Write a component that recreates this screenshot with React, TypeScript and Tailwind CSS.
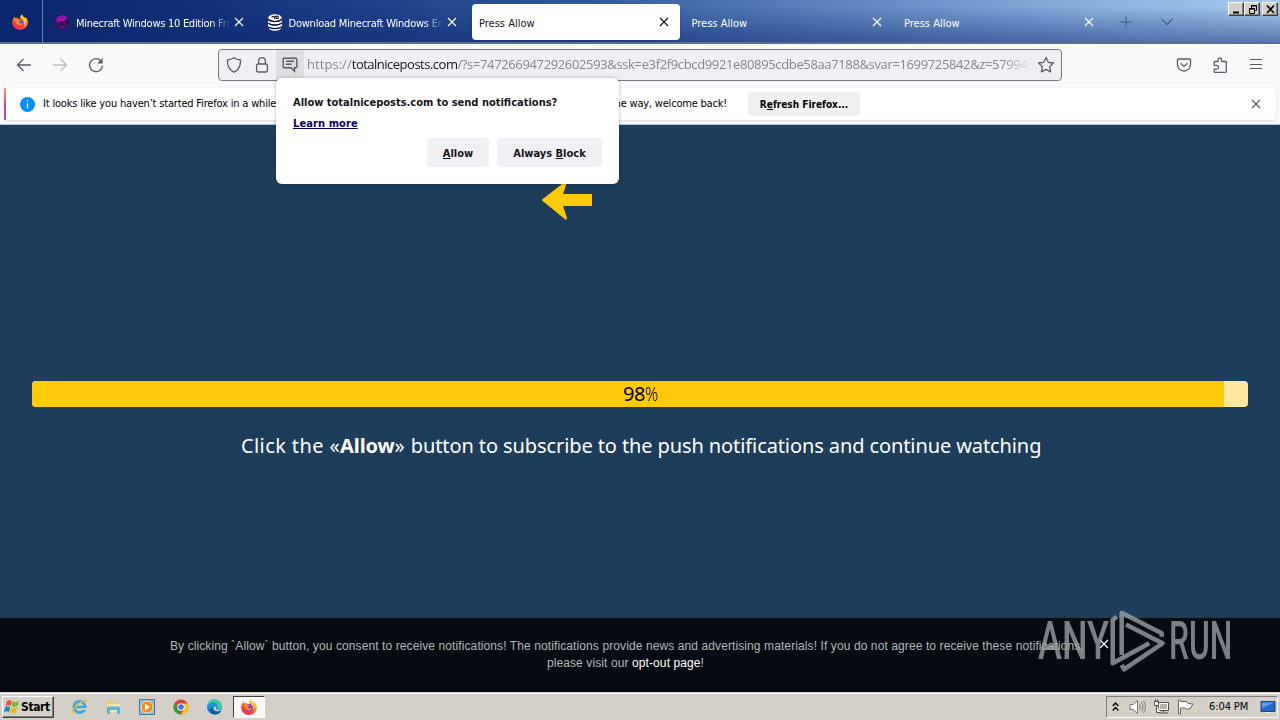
import React from "react";

type IconProps = { className?: string };

function Cross({ className = "" }: IconProps) {
  return (
    <svg className={`shrink-0 ${className}`} width="10" height="10" viewBox="0 0 10 10" fill="none" stroke="currentColor" strokeWidth="1.15">
      <path d="M1 1l8 8M9 1L1 9" />
    </svg>
  );
}

function FirefoxLogo({ className = "" }: IconProps) {
  return (
    <svg className={`shrink-0 ${className}`} width="16" height="16" viewBox="0 0 16 16">
      <defs>
        <linearGradient id="fxFlame" x1="0.85" y1="0.05" x2="0.25" y2="1">
          <stop offset="0" stopColor="#fff44f" />
          <stop offset="0.35" stopColor="#ff9a1f" />
          <stop offset="0.7" stopColor="#ff4433" />
          <stop offset="1" stopColor="#e6236d" />
        </linearGradient>
      </defs>
      <path d="M10 0.2c.5 1.9 2 2.7 3.1 3.9.3-.1.4-.6.3-1.1 1.6 1.5 2.5 3.6 2.4 5.7-.2 4-3.500 7.200-7.800 7.200C3.700 15.900.2 12.700.2 8.400c0-2 .7-3.600 1.700-4.800l.5-1.100 1.100 1.800c.8-.3 1.700-.2 2.400.1L8.500 5C7.800 3.200 8.500 1.100 10 .2z" fill="url(#fxFlame)" />
      <circle cx="8.200" cy="8.700" r="3.700" fill="#7a42d6" />
      <path d="M3.300 5.300c1.500-.7 2.900-.3 3.900.6l1.800.1c-.3 1-1.700 1.100-2.200 1.700-.2 1.100 1 1.900 2.200 1.700 1-.2 1.700-.1 1.700.3-.7 1.800-2.900 2.300-4.500 1.500C3.500 10 3 7.200 3.300 5.300z" fill="#ff8a20" />
      <path d="M10.200 2c.2 2 2.500 3 2.800 5.700.1 1.300-.3 2.500-.9 3.300.1-2.700-.4-4.500-2-5.900C9.100 4.100 9.500 2.800 10.200 2z" fill="#ffd23d" />
    </svg>
  );
}

function PurpleOrb() {
  return (
    <svg className="shrink-0" width="16" height="16" viewBox="0 0 16 16">
      <circle cx="8" cy="8" r="7.600" fill="#3b1157" />
      <path d="M1.500 7C2 3.500 5 1 8.500 1.200c2.300.2 4 1.300 5 2.800L9.500 8 6 6.500z" fill="#8f12a6" />
      <path d="M2.500 11.500l4-2.500 3 1 4-4c.5 4-2 7.800-6 7.800-2 0-4-.8-5-2.300z" fill="#681480" />
      <path d="M3 8.500l5-3.500 2 1" stroke="#b52bbd" strokeWidth="1" fill="none" />
      <path d="M4 13l4-3 3 1 3.500-4" stroke="#270c43" strokeWidth="1.400" fill="none" />
    </svg>
  );
}

function StackedDiscs() {
  return (
    <svg className="shrink-0" width="16" height="17" viewBox="0 0 16 17">
      <ellipse cx="8" cy="3.700" rx="6.700" ry="3.500" fill="#fff" />
      <path d="M4.500 3.200L7 2.200l1 2.600M8.500 2l1 2.800M9 2l2 .2.300 2-2 .600" stroke="#111" strokeWidth="1.100" fill="none" />
      <path d="M1 6c2 3 11 3 14 0v2.200c-3 3-11 3-14 .3zM1 9.600c2 2.900 11 2.900 14 0V12c-3 2.600-11 2.600-14 .3zM1.500 13.500c3 2.200 10 2.200 13 0-.5 2-3 3.300-6.500 3.300s-6-1.300-6.500-3.300z" fill="#fff" />
      <path d="M1.500 5.500c3 2.600 10 2.600 13 0M1.500 9.200c3 2.500 10 2.500 13 0M1.500 12.900c3 2.200 10 2.200 13 0" stroke="#10131f" strokeWidth="1.100" fill="none" />
    </svg>
  );
}

function Tab({ icon, title, active = false, fade = false, textClass = "" }: { icon?: React.ReactNode; title: string; active?: boolean; fade?: boolean; textClass?: string }) {
  return (
    <div className={`mr-[4.500px] flex h-9 w-52 shrink-0 items-center rounded pl-[7px] pr-[11px] ${active ? "bg-white text-[#15141a] shadow-sm" : "text-white"}`}>
      {icon && <span className="mr-[5px] shrink-0">{icon}</span>}
      <span className={`mt-[3px] min-w-0 flex-1 overflow-hidden whitespace-nowrap ${textClass} ${fade ? "[mask-image:linear-gradient(to_right,#000_88%,transparent)]" : ""}`}>{title}</span>
      <Cross className="ml-1" />
    </div>
  );
}

function TabStrip() {
  return (
    <div className="flex h-11 w-full items-start border-b-2 border-[#55709d] bg-[linear-gradient(to_bottom,transparent_15%,#0c287080),linear-gradient(to_right,#0a246a_0%,#123078_15%,#1f4189_30%,#345a9e_46%,#6388c1_67%,#8bb1df_86%,#a6caf0_100%)]">
      <div className="mr-[4px] flex h-[42px] w-[43px] items-center justify-center border-r border-[#6279aa] pr-0.5 pt-0.5">
        <FirefoxLogo />
      </div>
      <div className="flex pt-1">
        <Tab icon={<PurpleOrb />} title="Minecraft Windows 10 Edition Free" fade textClass="ml-px tracking-[-0.270px]" />
        <Tab icon={<StackedDiscs />} title="Download Minecraft Windows Edition" fade textClass="ml-px tracking-[-0.220px]" />
        <div className="flex">
          <Tab title="Press Allow" active />
          <Tab title="Press Allow" />
          <Tab title="Press Allow" />
        </div>
      </div>
      <div className="flex h-11 items-center gap-[29px] pl-[10px] text-[#4b6791]">
        <svg width="12" height="12" viewBox="0 0 12 12" stroke="currentColor" strokeWidth="1.300"><path d="M6 .5v11M.5 6h11" /></svg>
        <svg width="12" height="8" viewBox="0 0 12 8" fill="none" stroke="currentColor" strokeWidth="1.500"><path d="M.5 1L6 6.500 11.500 1" /></svg>
      </div>
      <div className="ml-auto flex pr-0.5 pt-0.5">
        <WindowButton><path d="M3 9.500h6" strokeWidth="2" /></WindowButton>
        <WindowButton><path d="M5.500 5V2.500h5v5H8M5 3h6M3.500 5.500h5v5h-5zM3 6h6" /></WindowButton>
        <div className="w-0.5" />
        <WindowButton><path d="M3 2.500l7 7.500M10 2.500L3 10" strokeWidth="1.700" /></WindowButton>
      </div>
    </div>
  );
}

function WindowButton({ children }: { children: React.ReactNode }) {
  return (
    <div className="flex h-3.5 w-4 items-center justify-center border border-b-[#404040] border-l-white border-r-[#404040] border-t-white bg-[#d4d0c8] shadow-[inset_-1px_-1px_#808080]">
      <svg width="13" height="12" viewBox="0 0 13 12" fill="none" stroke="#000">{children}</svg>
    </div>
  );
}

function NavBar() {
  return (
    <div className="flex h-[41px] w-full items-center bg-[#f9f9fb] text-[#5b5b66]">
      <div className="flex w-[218px] items-center gap-[20px] pl-4">
        <svg width="16" height="16" viewBox="0 0 16 16" fill="none" stroke="currentColor" strokeWidth="1.300"><path d="M15 8H1.500M7.500 2l-6 6 6 6" /></svg>
        <svg width="16" height="16" viewBox="0 0 16 16" fill="none" stroke="#bebec4" strokeWidth="1.300"><path d="M1 8h13.500M8.500 2l6 6-6 6" /></svg>
        <svg width="16" height="16" viewBox="0 0 16 16" fill="none" stroke="currentColor" strokeWidth="1.400"><path d="M13.400 4.500A6.500 6.500 0 1 0 14.500 8.800" /><path d="M14.700 1v5.500H9.200z" fill="currentColor" stroke="none" /></svg>
      </div>
      <div className="flex h-8 w-[844px] items-center rounded border border-[#77777f] bg-[#f0f0f4]">
        <div className="flex w-[57px] items-center gap-3 pl-[7px]">
          <svg width="16" height="16" viewBox="0 0 16 16" fill="none" stroke="currentColor" strokeWidth="1.300"><path d="M8 .8c2.200 1.500 4.500 2 6.500 2.200.3 5.200-1.500 9.700-6.500 12.200C3 12.700 1.200 8.200 1.500 3 3.500 2.800 5.800 2.300 8 .8z" /></svg>
          <svg width="16" height="16" viewBox="0 0 16 16" fill="none" stroke="currentColor" strokeWidth="1.300"><rect x="2.600" y="7" width="10.800" height="8" rx="1.500" /><path d="M4.700 7V4a3.300 3.300 0 0 1 6.600 0v3" /></svg>
        </div>
        <div className="flex h-[30px] w-7 items-center justify-center bg-[#dfdfe3]">
          <svg width="16" height="16" viewBox="0 0 16 16" fill="none" stroke="currentColor" strokeWidth="1.400"><path d="M2.200 1.200h11.600c.6 0 1 .4 1 1v7.600c0 .6-.4 1-1 1h-1.300v3.500L9 10.800H2.200c-.6 0-1-.4-1-1V2.200c0-.6.4-1 1-1zM4 4.300h8M4 7.300h5.500" /></svg>
        </div>
        <div className="ml-[3px] w-[724px] overflow-hidden whitespace-nowrap pb-px font-['Open_Sans',sans-serif] text-[13px] leading-5 tracking-[-0.360px] text-[#85858c] [font-stretch:normal] [mask-image:linear-gradient(to_right,#000_96%,transparent)]">
          <span className="tracking-[0.050px]">https://</span><span className="tracking-[-0.500px] text-[#15141a]">totalniceposts.com</span>/?s=747266947292602593&amp;ssk=e3f2f9cbcd9921e80895cdbe58aa7188&amp;svar=1699725842&amp;z=5799412
        </div>
        <svg className="ml-[6px]" width="18" height="18" viewBox="0 0 18 18" fill="none" stroke="currentColor" strokeWidth="1.300" strokeLinejoin="round"><path d="M9 1.500l2.300 4.800 5.200.7-3.800 3.600.9 5.300L9 13.400l-4.600 2.500.9-5.300L1.500 7l5.200-.7z" /></svg>
      </div>
      <div className="ml-auto flex items-center gap-5 pr-4">
        <svg width="16" height="16" viewBox="0 0 16 16" fill="none" stroke="currentColor" strokeWidth="1.300"><path d="M2.500 2h11c.6 0 1 .4 1 1v4.500a6.500 6.500 0 0 1-13 0V3c0-.6.4-1 1-1z" /><path d="M4.600 6.200L8 9.400l3.400-3.200" /></svg>
        <svg width="16" height="16" viewBox="0 0 16 16" fill="none" stroke="currentColor" strokeWidth="1.300"><path d="M6 4.500V2.700a1.800 1.800 0 0 1 3.600 0v1.800h3.900c.5 0 .8.300.8.800v9.200c0 .5-.3.800-.8.800H3c-.5 0-.8-.3-.8-.8v-2.300h2.500a1.900 1.900 0 0 0 0-3.800H2.200V5.300c0-.5.300-.8.800-.8z" /></svg>
        <svg width="16" height="16" viewBox="0 0 16 16" stroke="currentColor" strokeWidth="1.200"><path d="M2 2.500h12M2 7.500h12M2 11.500h12" /></svg>
      </div>
    </div>
  );
}

function InfoBar() {
  return (
    <div className="flex h-10 w-full items-start border-b border-[#a9c8e0] bg-[#f9f9fb] px-1 pt-[3px]">
      <div className="flex h-8 flex-1 items-center rounded bg-white shadow-sm">
        <div className="h-8 w-0.5 bg-gradient-to-b from-[#ff9a6c] via-[#e13d80] to-[#9b52d8]" />
        <svg className="ml-3.5" width="15" height="15" viewBox="0 0 15 15"><circle cx="7.500" cy="7.500" r="7.500" fill="#0090ed" /><path d="M7.500 6.200V11.500M7.500 3.200v1.500" stroke="#fff" strokeWidth="1.300" /></svg>
        <div className="ml-2 flex w-[705px] whitespace-nowrap tracking-[-0.180px] text-black">
          <span>It looks like you haven’t started Firefox in a while.</span>
          <span className="ml-auto pr-[21px] tracking-[-0.200px]">By the way, welcome back!</span>
        </div>
        <button className="flex h-6 w-28 items-center justify-center rounded bg-[#f0f0f0] pt-px text-[10px] font-bold text-black"><span>R<u>e</u>fresh Firefox...</span></button>
        <Cross className="ml-auto mr-[15px] text-[#5b5b66]" />
      </div>
    </div>
  );
}

function PermissionPopup() {
  return (
    <div className="absolute left-[276px] top-[78px] z-10 flex h-[106px] w-[343px] flex-col rounded-md bg-white px-4 pt-[18px] font-bold text-[#15141a] shadow-[0_0_4px_rgba(0,0,0,0.25)]">
      <p className="h-[21px] whitespace-nowrap pl-px leading-[14px]">Allow totalniceposts.com to send notifications?</p>
      <p className="pl-px leading-[14px] tracking-[0.100px] text-[#0b0060] underline">Learn more</p>
      <div className="mt-[7px] flex justify-end gap-2 pr-px">
        <button className="h-[29px] w-[62px] rounded bg-[#f0f0f4] pt-0.5"><u>A</u>llow</button>
        <button className="h-[29px] w-[105px] rounded bg-[#f0f0f4] pt-0.5">Always <u>B</u>lock</button>
      </div>
    </div>
  );
}

function AnyRunMark() {
  return (
    <div className="absolute left-[1038px] top-[608px] flex h-[66px] w-[196px] items-center text-[#a4a7aa] opacity-75 [font-stretch:normal]">
      <span className="w-[70px] origin-left scale-x-[0.680] whitespace-nowrap font-['Roboto',sans-serif] text-[53px] font-medium leading-none">ANY</span>
      <svg className="shrink-0" width="58" height="66" viewBox="0 0 58 66" fill="none" stroke="currentColor" strokeWidth="4.500" strokeLinejoin="round">
        <path d="M8.700 8.700L4.700 12v43.300l36.600-20" />
        <path d="M13.700 47V4.700l40 20.500v3.500" />
        <path d="M18 16.500l36.500 18.800L16 61.300 13.700 57" />
      </svg>
      <span className="ml-[3px] origin-left scale-x-[0.600] whitespace-nowrap font-['Roboto',sans-serif] text-[53px] font-medium leading-none">RUN</span>
    </div>
  );
}

function PageContent() {
  return (
    <main className="flex h-[567px] w-full flex-col bg-[#1d3d5b] text-white">
      <div className="flex h-64 items-start pl-[541px] pt-[56px]">
        <svg width="52" height="40" viewBox="0 0 52 40"><path d="M.500 19L25 0l1 1-4 12h29v12H22l4 12-1 2z" fill="#ffcb08" /></svg>
      </div>
      <div className="mx-8 flex h-[26px] items-center overflow-hidden rounded bg-[#ffe9a0] shadow-[0_0_1px_#3c3c30]">
        <div className="flex h-full w-[1192px] items-center bg-[#ffcb08] pl-[591px]">
          <span className="whitespace-nowrap font-['Noto_Sans',sans-serif] text-[20px] tracking-[-0.500px] text-black">98<span className="inline-block origin-left scale-x-[0.820] font-light">%</span></span>
        </div>
      </div>
      <p className="mt-[25px] whitespace-nowrap pl-[241px] font-['Noto_Sans',sans-serif] text-[20px] leading-7 tracking-[-0.100px] [font-stretch:normal]"><span className="tracking-[0.400px]">Click the «</span><b className="tracking-[-0.100px]">Allow</b><span className="tracking-[0.400px]">» </span>button to subscribe to the push notifications and continue watching</p>
      <div className="mt-auto flex h-[74px] bg-[#060b12] pl-[170px] pt-[20px] text-center font-['Liberation_Sans',sans-serif] text-[12px] leading-[17px] tracking-[0.100px] text-[#b4b6b8]">
        <p className="w-[911px] whitespace-nowrap">By clicking `Allow` button, you consent to receive notifications! The notifications provide news and advertising materials! If you do not agree to receive these notifications,<br />please visit our <span className="text-white">opt-out page</span>!</p>
        <Cross className="ml-[18px] mt-px text-white" />
      </div>
    </main>
  );
}

function Taskbar() {
  return (
    <footer className="flex h-7 w-full items-center border-t border-[#d4d0c8] bg-[#d4d0c8] text-black shadow-[inset_0_1px_white]">
      <button className="ml-0.5 flex h-[22px] w-[52px] items-center gap-px border border-b-[#404040] border-l-white border-r-[#404040] border-t-white pl-px text-[12px] font-bold tracking-[-0.400px] shadow-[inset_-1px_-1px_#808080]">
        <svg className="shrink-0" width="16" height="16" viewBox="0 0 16 16"><path d="M3 2c2-1 3-.8 5 .2L6.500 7C5 6 3.500 6 1.700 6.700z" fill="#ee5524" /><path d="M8.800 2.600c2 .8 3.700.8 6.200-.6l-1.500 5c-2 1.200-4 1-6-.1z" fill="#79b82e" /><path d="M1.400 8c2-.8 3.200-.6 4.800.3L5 13c-2-1-3.400-.8-5 0z" fill="#1687c9" /><path d="M7 8.700c2 .9 4 .9 6.200-.3l-1.400 5c-2 1-4 .9-6-.1z" fill="#f4b913" /></svg>
        <span>Start</span>
      </button>
      <div className="ml-[17px] flex items-center gap-[17.200px]">
        <svg width="17" height="17" viewBox="0 0 17 17" fill="none"><circle cx="8.500" cy="9" r="5.500" stroke="#3ba7df" strokeWidth="3" /><path d="M4 9h10" stroke="#3ba7df" strokeWidth="2.500" /><path d="M11.500 11h5" stroke="#d4d0c8" strokeWidth="2" /><path d="M3 15C-.5 17 1 12 5 8S17-.5 15.500 4" stroke="#e6bd36" strokeWidth="1.300" /></svg>
        <svg width="17" height="16" viewBox="0 0 17 16"><path d="M1 2h6l1 1.500h7V13H1z" fill="#e7c973" /><path d="M2 5h13v8H2z" fill="#f5e8a8" /><path d="M2 15V9c0-1 .5-1.500 1.500-1.500h10c1 0 1.500.5 1.500 1.500v6h-3v-4H5v4z" fill="#63b5d8" /></svg>
        <svg width="16" height="16" viewBox="0 0 16 16"><path d="M.5.5h15v15H.5z" fill="#8bbddd" stroke="#397ca9" /><circle cx="8" cy="8" r="6" fill="#f58b17" stroke="#fff" strokeWidth=".6" /><path d="M6 4.500l5 3.500-5 3.500z" fill="#fff" /></svg>
        <svg width="16" height="16" viewBox="0 0 16 16"><circle cx="8" cy="8" r="7.500" fill="#e73c30" /><path d="M1.500 4.200L6 12l2 3.500A7.500 7.500 0 0 1 1.500 4.200z" fill="#27a34c" /><path d="M8 4.500h6.600A7.500 7.500 0 0 1 8 15.500l3.300-5.800z" fill="#fbc618" /><circle cx="8" cy="8" r="3.700" fill="#fff" /><circle cx="8" cy="8" r="2.800" fill="#357de8" /></svg>
        <svg width="17" height="16" viewBox="0 0 17 16"><circle cx="8.500" cy="8" r="7.500" fill="#1379ca" /><path d="M1.200 6C2.500-1.500 14.500-1 16 6.500c.5 3-2 4.500-5.500 4 2-2 .5-5-3-5-3 0-5 1.500-6.300 3.500z" fill="#45c8a2" /><path d="M1.200 8C1.500 4.500 5 3 8.500 3.500 11 4 12 6 11.500 8L8 7l-3 5z" fill="#1797da" /><path d="M6.500 8c-1.500 3 1.500 5.500 6 4.500l3-1C13.500 16 7 17 4.500 13 3 10.500 4.500 8 6.500 8z" fill="#0e5ba7" /><path d="M8.500 7.500c1.500-.3 2.500 1 1.500 2.800 2 1 4 .8 5.500-.3-.5 1.800-3.500 2.700-5.700 1.800-2.300-.8-3-3.300-1.300-4.300z" fill="#d4d0c8" /></svg>
      </div>
      <div className="ml-[10px] flex h-[22px] w-8 items-center justify-center border border-b-white border-l-[#404040] border-r-white border-t-[#404040] bg-[#faf9f7]"><FirefoxLogo /></div>
      <div className="ml-auto mr-0.5 flex h-[22px] w-[172px] items-center border border-b-white border-l-[#808080] border-r-white border-t-[#808080] pl-[5px] pr-px">
        <svg width="7" height="10" viewBox="0 0 7 10" fill="none" stroke="#000" strokeWidth="1.300"><path d="M.7 4l2.800-3 2.800 3M.7 8.500l2.800-3 2.800 3" /></svg>
        <svg className="ml-2.5" width="17" height="16" viewBox="0 0 17 16" fill="#fff" stroke="#77746e"><path d="M1 5.500h3L8.500 1.500v13L4 10.500H1z" /><path d="M10.500 5.500c1 1.500 1 3.500 0 5M12.500 3.500c2 2.500 2 6.500 0 9M14.500 2c2.500 3.500 2.500 8.500 0 12" fill="none" /></svg>
        <svg className="ml-[7px]" width="17" height="16" viewBox="0 0 17 16" fill="#b8b5ae" stroke="#55524e"><path d="M5.500 3.500h10v8h-10zM6 14h9M10.500 11.500v2" /><path d="M6.500 4.500h8v6h-8z" stroke="#fff" /><path d="M1.500 2.500h4v4h-4zM2.500.5v2M4.500.5v2M3.500 6.500v7h4" fill="#fff" /></svg>
        <svg className="ml-[7px]" width="18" height="16" viewBox="0 0 18 16" fill="#fff" stroke="#66635e"><path d="M1.500 1v14h2V9H8l1 1h4l3-5-5-.5-1.500-2H3.500V1z" /></svg>
        <span className="ml-[14px] whitespace-nowrap tracking-[-0.100px]">6:04 PM</span>
        <svg className="ml-auto" width="16" height="16" viewBox="0 0 16 16"><path d="M1 2.500h14v10H1z" fill="#2767c5" stroke="#244680" /><path d="M2 3.500h12L2 9z" fill="#5b9ceb" /><path d="M5 13.500h6" stroke="#e8edf5" /></svg>
      </div>
    </footer>
  );
}

export default function App() {
  return (
    <div className="relative flex h-[720px] w-[1280px] flex-col overflow-hidden font-['DejaVu_Sans_Condensed','DejaVu_Sans',sans-serif] text-[11px] leading-[14px] [font-stretch:condensed]">
      <TabStrip />
      <NavBar />
      <InfoBar />
      <PageContent />
      <Taskbar />
      <PermissionPopup />
      <AnyRunMark />
    </div>
  );
}
